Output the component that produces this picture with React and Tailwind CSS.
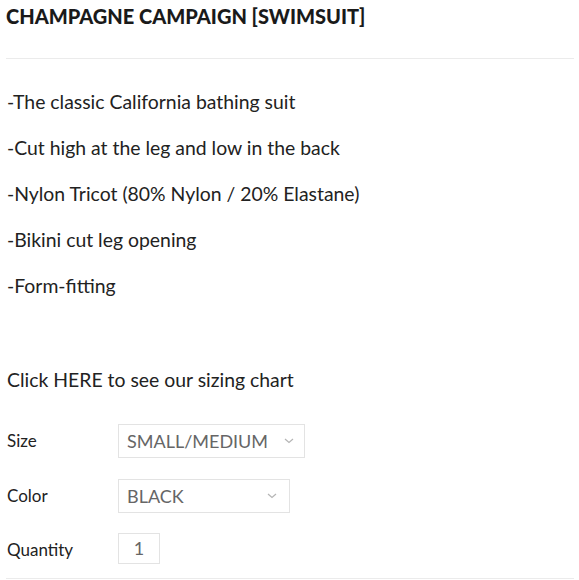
export default function App() {
  const bullets = [
    "-The classic California bathing suit",
    "-Cut high at the leg and low in the back",
    "-Nylon Tricot (80% Nylon / 20% Elastane)",
    "-Bikini cut leg opening",
    "-Form-fitting",
  ];
  const Chevron = () => (
    <svg width="10" height="6" viewBox="0 0 10 6" fill="none" className="shrink-0">
      <path d="M1 1l4 3.5L9 1" stroke="#b5b5b5" strokeWidth="1.2" />
    </svg>
  );
  return (
    <div className="w-[579px] h-[580px] bg-white overflow-hidden text-[#222]" style={{ fontFamily: "Lato, 'Noto Sans', sans-serif" }}>
      <div className="px-[6px]">
        <h1 className="pt-[3px] text-[20px] leading-[26px] font-black tracking-[0em] text-[#1a1a1a]">
          CHAMPAGNE CAMPAIGN [SWIMSUIT]
        </h1>
        <div className="mt-[29px] h-px bg-[#ebebeb] w-[568px]" />
        <div className="pt-[31px] text-[19.4px] leading-[24px] text-[#222]">
          {bullets.map((b, i) => (
            <p key={i} className="h-[46px] pl-px">{b}</p>
          ))}
          <p className="mt-[48px] pl-px">Click HERE to see our sizing chart</p>
        </div>
        <div className="mt-[32px] text-[17px] text-[#222]">
          <div className="flex items-center h-[34px]">
            <span className="w-[112px] pl-px">Size</span>
            <div className="w-[187px] h-[34px] border border-[#e3e3e3] flex items-center justify-between pl-[8px] pr-[10px] text-[18px] text-[#666]">
              <span>SMALL/MEDIUM</span>
              <Chevron />
            </div>
          </div>
          <div className="flex items-center h-[34px] mt-[21px]">
            <span className="w-[112px] pl-px">Color</span>
            <div className="w-[172px] h-[34px] border border-[#e3e3e3] flex items-center justify-between pl-[8px] pr-[12px] text-[18px] text-[#666]">
              <span>BLACK</span>
              <Chevron />
            </div>
          </div>
          <div className="flex items-center h-[31px] mt-[20px]">
            <span className="w-[112px] pl-px pt-[3px]">Quantity</span>
            <div className="w-[42px] h-[31px] border border-[#e3e3e3] flex items-center justify-center text-[18px] text-[#666]">
              1
            </div>
          </div>
        </div>
        <div className="mt-[14px] h-px bg-[#ebebeb] w-[568px]" />
      </div>
    </div>
  );
}
